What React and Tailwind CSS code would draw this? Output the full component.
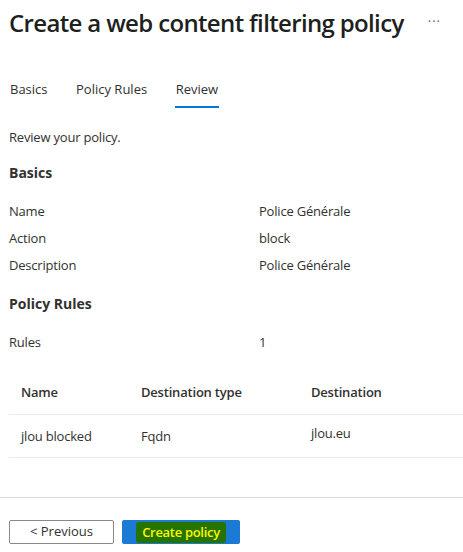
const font = { fontFamily: '"Open Sans", "Noto Sans", sans-serif' };

const basics = [
  { label: 'Name', value: 'Police Générale' },
  { label: 'Action', value: 'block' },
  { label: 'Description', value: 'Police Générale' },
];

const tabs = ['Basics', 'Policy Rules', 'Review'];

function Field({ label, value }) {
  return (
    <div className="flex h-[27px] items-center text-[13px] tracking-[-0.2px] text-[#323130]">
      <span className="w-[250px]">{label}</span>
      <span>{value}</span>
    </div>
  );
}

export default function App() {
  return (
    <div
      className="flex h-[552px] w-[463px] flex-col overflow-hidden bg-white text-[#323130]"
      style={font}
    >
      <div className="flex items-center justify-between pl-[9px] pr-[22px] pt-[5px]">
        <h1 className="whitespace-nowrap text-[24px] font-semibold leading-[36px] tracking-[-0.65px] text-[#201f1e]">
          Create a web content filtering policy
        </h1>
        <span className="pb-[2px] text-[13px] tracking-[1px] text-[#605e5c]">···</span>
      </div>

      <nav className="mt-[38px] flex gap-[26.5px] pl-[9px] text-[13px]">
        {tabs.map((tab) => (
          <div key={tab} className="flex flex-col">
            <span className="px-[1px] leading-[20px]">{tab}</span>
            <span
              className={
                tab === 'Review'
                  ? 'mt-[7px] h-[2px] bg-[#0078d4]'
                  : 'mt-[7px] h-[2px] bg-transparent'
              }
            />
          </div>
        ))}
      </nav>

      <div className="px-[9px]">
        <p className="mt-[19px] text-[13px] leading-[20px] tracking-[-0.2px]">Review your policy.</p>

        <h2 className="mt-[16px] text-[14px] font-bold leading-[20px]">Basics</h2>
        <div className="mt-[15px]">
          {basics.map((row) => (
            <Field key={row.label} {...row} />
          ))}
        </div>

        <h2 className="mt-[15px] text-[14px] font-bold leading-[20px]">Policy Rules</h2>
        <div className="mt-[15px]">
          <Field label="Rules" value="1" />
        </div>

        <table className="mt-[16px] w-[454px] text-left text-[13px] tracking-[-0.2px]">
          <thead>
            <tr className="h-[42px] border-b border-[#edebe9]">
              <th className="w-[132px] pl-[12px] font-semibold">Name</th>
              <th className="w-[170px] font-semibold">Destination type</th>
              <th className="font-semibold">Destination</th>
            </tr>
          </thead>
          <tbody>
            <tr className="h-[43px] border-b border-[#edebe9]">
              <td className="pl-[12px] pt-[3px]">jlou blocked</td>
              <td className="pt-[3px]">Fqdn</td>
              <td className="pb-[3px]">jlou.eu</td>
            </tr>
          </tbody>
        </table>
      </div>

      <div className="mt-auto border-t border-[#d6d6d6] px-[9px] pb-[8px] pt-[22px]">
        <div className="flex gap-[8px]">
          <button className="h-[24px] w-[105px] rounded-[2px] border border-[#8a8886] text-[13px] text-[#323130]">
            &lt; Previous
          </button>
          <button className="flex h-[24px] w-[118px] items-center justify-center rounded-[2px] bg-[#1b7ad4] text-[13px] font-semibold">
            <span className="rounded-[3px] bg-[#267300] px-[6px] leading-[21px] tracking-[-0.3px] text-[#f8f800]">
              Create policy
            </span>
          </button>
        </div>
      </div>
    </div>
  );
}
